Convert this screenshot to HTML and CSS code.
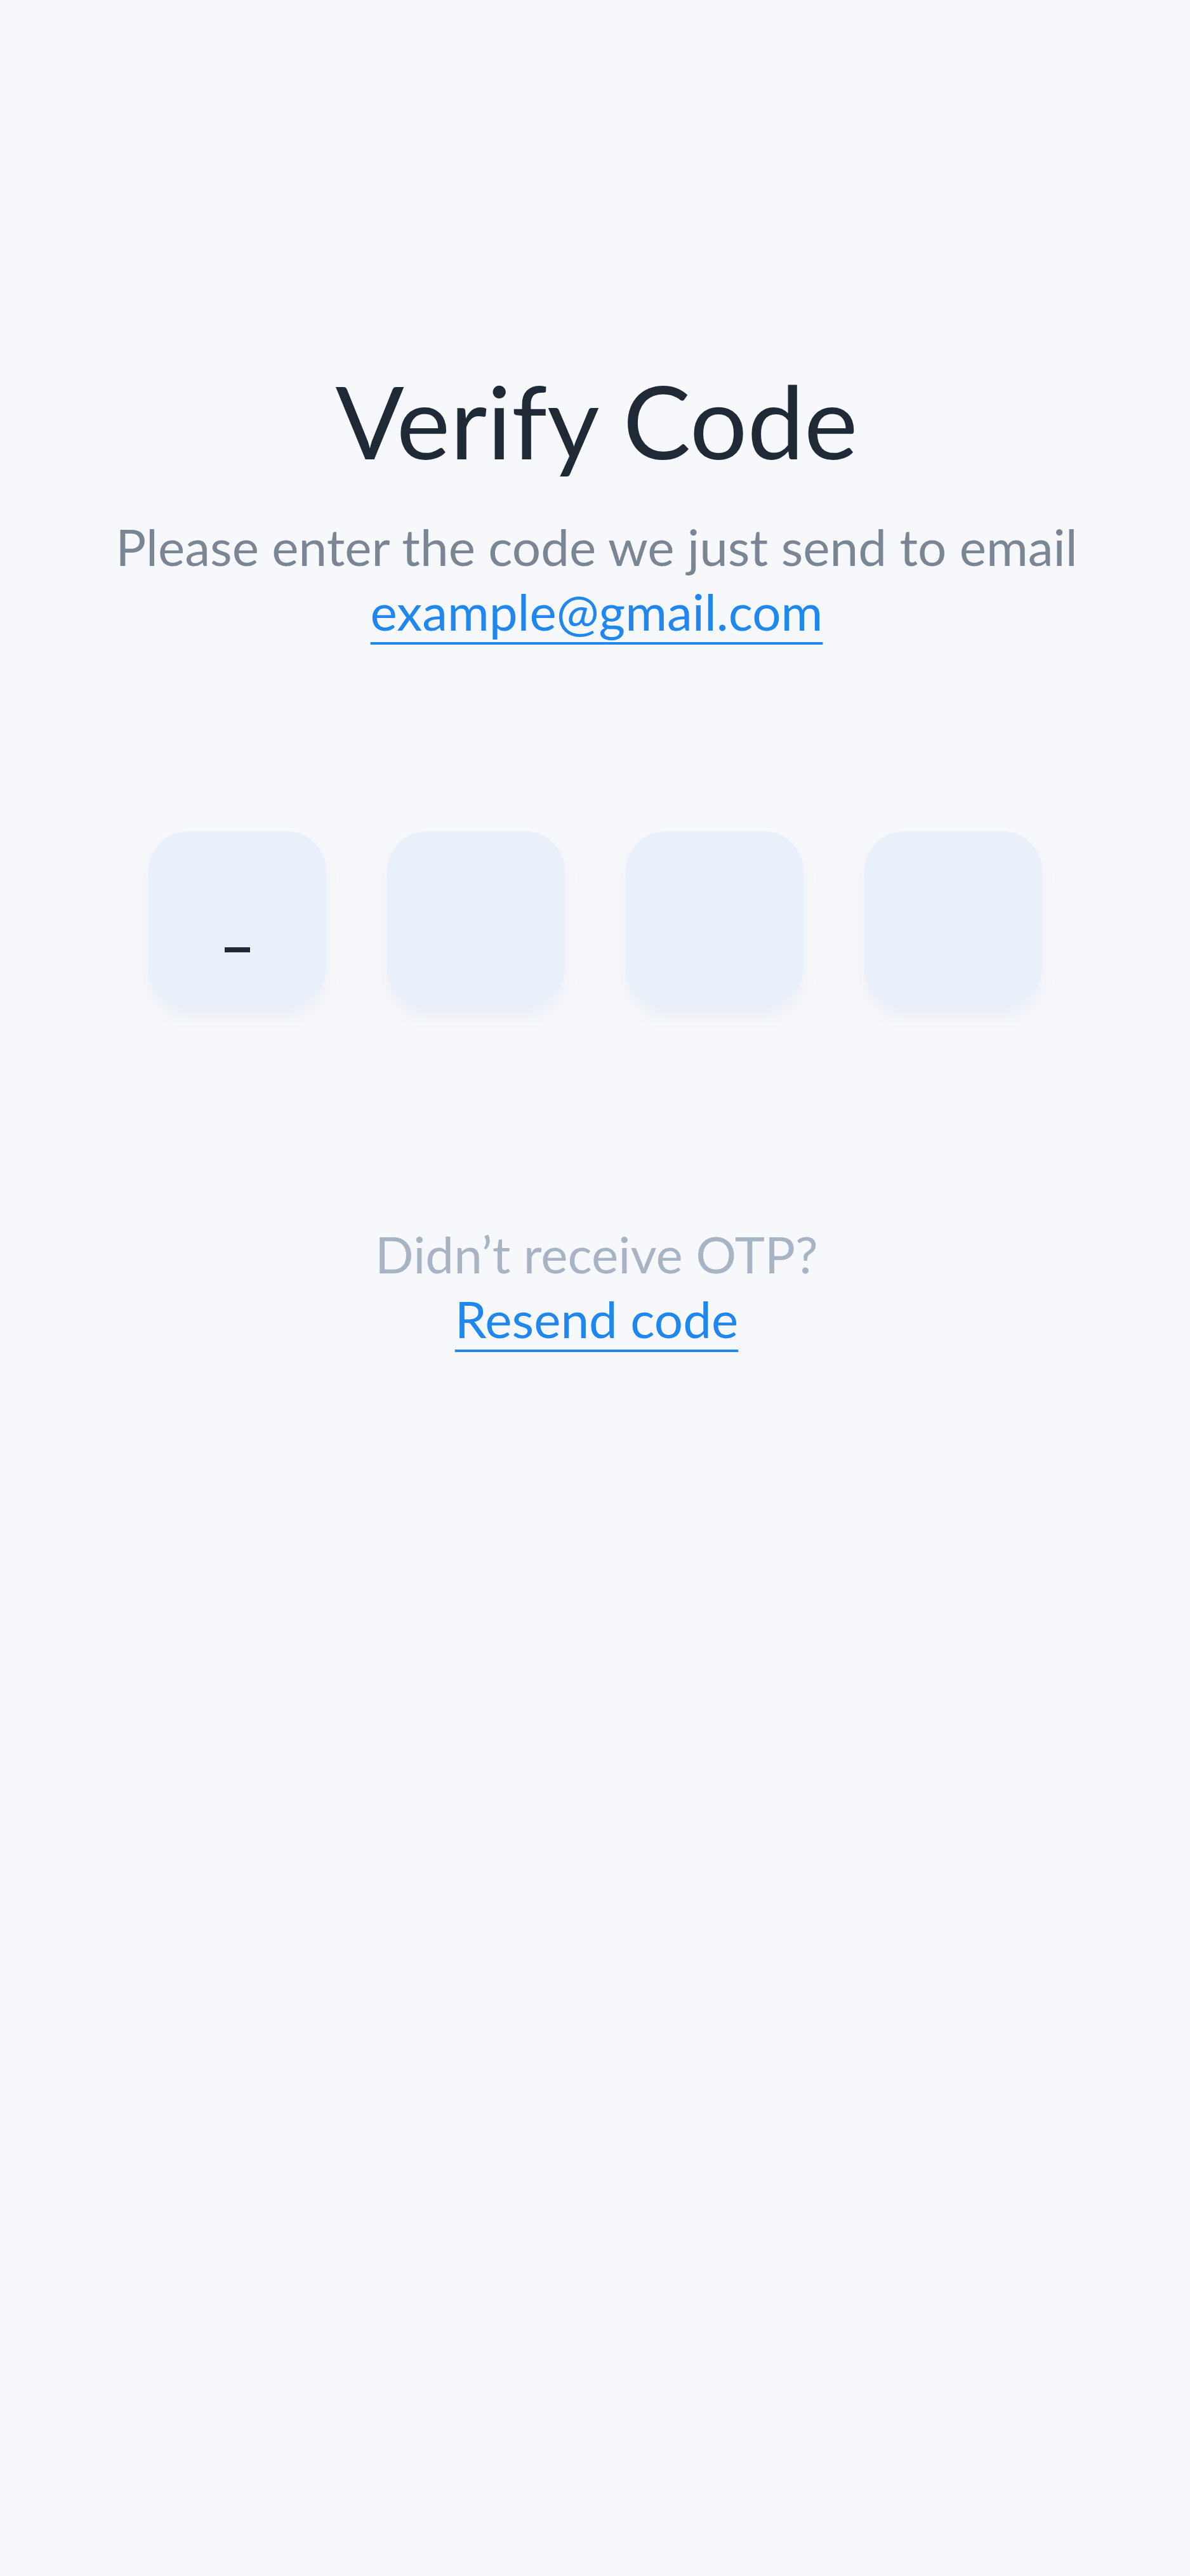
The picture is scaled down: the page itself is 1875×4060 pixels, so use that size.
FILE: index.html
```html
<!DOCTYPE html>
<html lang="en">
<head>
  <title>Verify Code</title>
  <meta charset="utf-8" />
  <link rel="stylesheet" href="styles.css">
</head>
<body>
  <div class="screen">
    <h1 class="title">Verify Code</h1>
    <p class="subtitle">
      Please enter the code we just send to email<br>
      <a href="#" class="link">example@gmail.com</a>
    </p>

    <!-- 4 digit code boxes -->
    <div class="code-row">
      <div class="code-box"><span class="caret"></span></div>
      <div class="code-box"></div>
      <div class="code-box"></div>
      <div class="code-box"></div>
    </div>

    <p class="resend">
      Didn’t receive OTP?<br>
      <a href="#" class="link">Resend code</a>
    </p>
  </div>
</body>
</html>
```

FILE: styles.css
```css
html, body{
  margin: 0;
  padding: 0;
}
body{
  background-color: #f6f8fc;
  font-family: Lato, "Noto Sans", sans-serif;
  min-height: 4060px;
}
.screen{
  display: flex;
  flex-direction: column;
  align-items: center;
  padding-top: 566px;
}
.title{
  margin: 0;
  padding-left: 5px;
  color: #1f2a36;
  font-size: 160px;
  font-weight: 400;
  line-height: 1.2;
}
.subtitle{
  margin: 52px 0 0 0;
  padding-left: 5px;
  color: #7b8694;
  font-size: 80px;
  line-height: 1.28;
  text-align: center;
}
.link{
  color: #2087ef;
  text-decoration: underline;
  text-decoration-thickness: 4px;
  text-underline-offset: 18px;
}
.code-row{
  display: flex;
  gap: 96px;
  margin-top: 295px;
}
.code-box{
  width: 280px;
  height: 278px;
  border-radius: 62px;
  background-color: #eaf0fa;
  box-shadow: 0 16px 24px rgba(30, 60, 120, 0.05);
  display: flex;
  justify-content: center;
  align-items: flex-start;
}
.caret{
  width: 40px;
  height: 8px;
  margin-top: 183px;
  background-color: #1f2a36;
}
.resend{
  margin: 337px 0 0 0;
  padding-left: 5px;
  color: #a8b4c4;
  font-size: 80px;
  line-height: 1.28;
  text-align: center;
}
```
